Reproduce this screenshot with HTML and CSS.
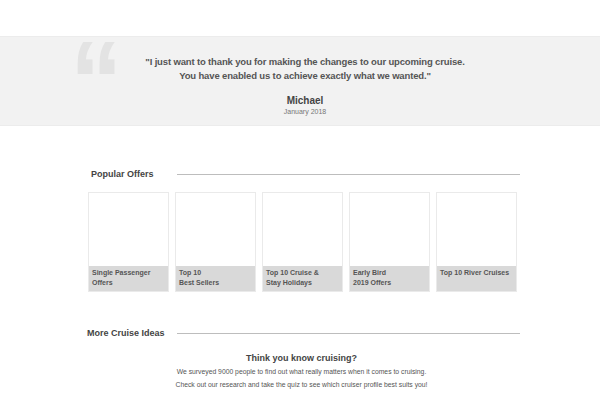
FILE: index.html
```html
<!DOCTYPE html>
<html>
<head>
<meta charset="utf-8">
<link rel="stylesheet" href="styles.css">
</head>
<body>
<div class="top-gap"></div>
<section class="testimonial">
  <div class="quote-mark">&ldquo;</div>
  <p class="quote">"I just want to thank you for making the changes to our upcoming cruise.<br>You have enabled us to achieve exactly what we wanted."</p>
  <p class="author">Michael</p>
  <p class="date">January 2018</p>
</section>
<main class="content">
  <div class="section-head head-popular">
    <h2>Popular Offers</h2>
    <span class="rule"></span>
  </div>
  <div class="cards">
    <div class="card"><div class="card-img"></div><div class="card-label">Single Passenger<br>Offers</div></div>
    <div class="card"><div class="card-img"></div><div class="card-label">Top 10<br>Best Sellers</div></div>
    <div class="card"><div class="card-img"></div><div class="card-label">Top 10 Cruise &amp;<br>Stay Holidays</div></div>
    <div class="card"><div class="card-img"></div><div class="card-label">Early Bird<br>2019 Offers</div></div>
    <div class="card"><div class="card-img"></div><div class="card-label">Top 10 River Cruises</div></div>
  </div>
  <div class="section-head head-ideas">
    <h2>More Cruise Ideas</h2>
    <span class="rule"></span>
  </div>
  <div class="idea">
    <h3>Think you know cruising?</h3>
    <p>We surveyed 9000 people to find out what really matters when it comes to cruising.</p>
    <p>Check out our research and take the quiz to see which cruiser profile best suits you!</p>
  </div>
</main>
</body>
</html>
```

FILE: styles.css
```css
* { box-sizing: border-box; }
html, body { margin: 0; padding: 0; background: #fff; }
body {
  font-family: "Liberation Sans", Arial, sans-serif;
  color: #555;
  width: 600px;
  height: 400px;
  overflow: hidden;
}
.top-gap { height: 36px; }
.testimonial {
  position: relative;
  height: 90px;
  background: #f2f2f2;
  border-top: 1px solid #ececec;
  border-bottom: 1px solid #ececec;
  text-align: center;
  padding-top: 18px;
}
.quote-mark {
  position: absolute;
  left: 70px;
  top: -13px;
  font-family: "Liberation Sans", Arial, sans-serif;
  font-weight: bold;
  font-size: 114px;
  line-height: 114px;
  color: #e3e3e3;
  transform: scaleX(0.92);
  transform-origin: left top;
}
.quote {
  margin: 0;
  font-size: 9.5px;
  line-height: 14px;
  letter-spacing: -0.15px;
  font-weight: bold;
  color: #555;
  padding-left: 10px;
}
.author {
  margin: 12px 0 0;
  font-size: 10px;
  line-height: 12px;
  font-weight: bold;
  color: #444;
  padding-left: 10px;
}
.date {
  margin: 0;
  font-size: 7px;
  line-height: 9px;
  color: #777;
  padding-left: 10px;
}
.content {
  width: 432px;
  margin: 0 0 0 88px;
}
.section-head {
  display: flex;
  align-items: center;
  height: 12px;
}
.section-head h2 {
  margin: 0;
  font-size: 9px;
  line-height: 12px;
  font-weight: bold;
  color: #444;
  width: 89px;
  flex: none;
}
.head-popular { margin-top: 42px; }
.head-popular h2 { padding-left: 3px; }
.head-ideas { margin-top: 35px; }
.head-ideas h2 { margin-left: -1px; width: 90px; }
.rule {
  flex: 1;
  height: 1px;
  background: #bdbdbd;
}
.cards {
  display: grid;
  grid-template-columns: repeat(5, 81px);
  gap: 6px;
  margin-top: 12px;
}
.card {
  height: 100px;
  border: 1px solid #eaeaea;
  display: flex;
  flex-direction: column;
  background: #fff;
}
.card-img { flex: 1; }
.card-label {
  height: 25px;
  background: #d9d9d9;
  font-size: 7px;
  line-height: 10px;
  font-weight: bold;
  color: #555;
  padding: 2px 3px 0;
}
.idea {
  text-align: center;
  margin-left: -88px;
  width: 600px;
  padding-left: 3px;
  margin-top: 12px;
}
.idea h3 {
  margin: 0;
  font-size: 9px;
  line-height: 14px;
  font-weight: bold;
  color: #444;
}
.idea p {
  margin: 0;
  font-size: 6.8px;
  line-height: 13px;
  color: #555;
}
```
